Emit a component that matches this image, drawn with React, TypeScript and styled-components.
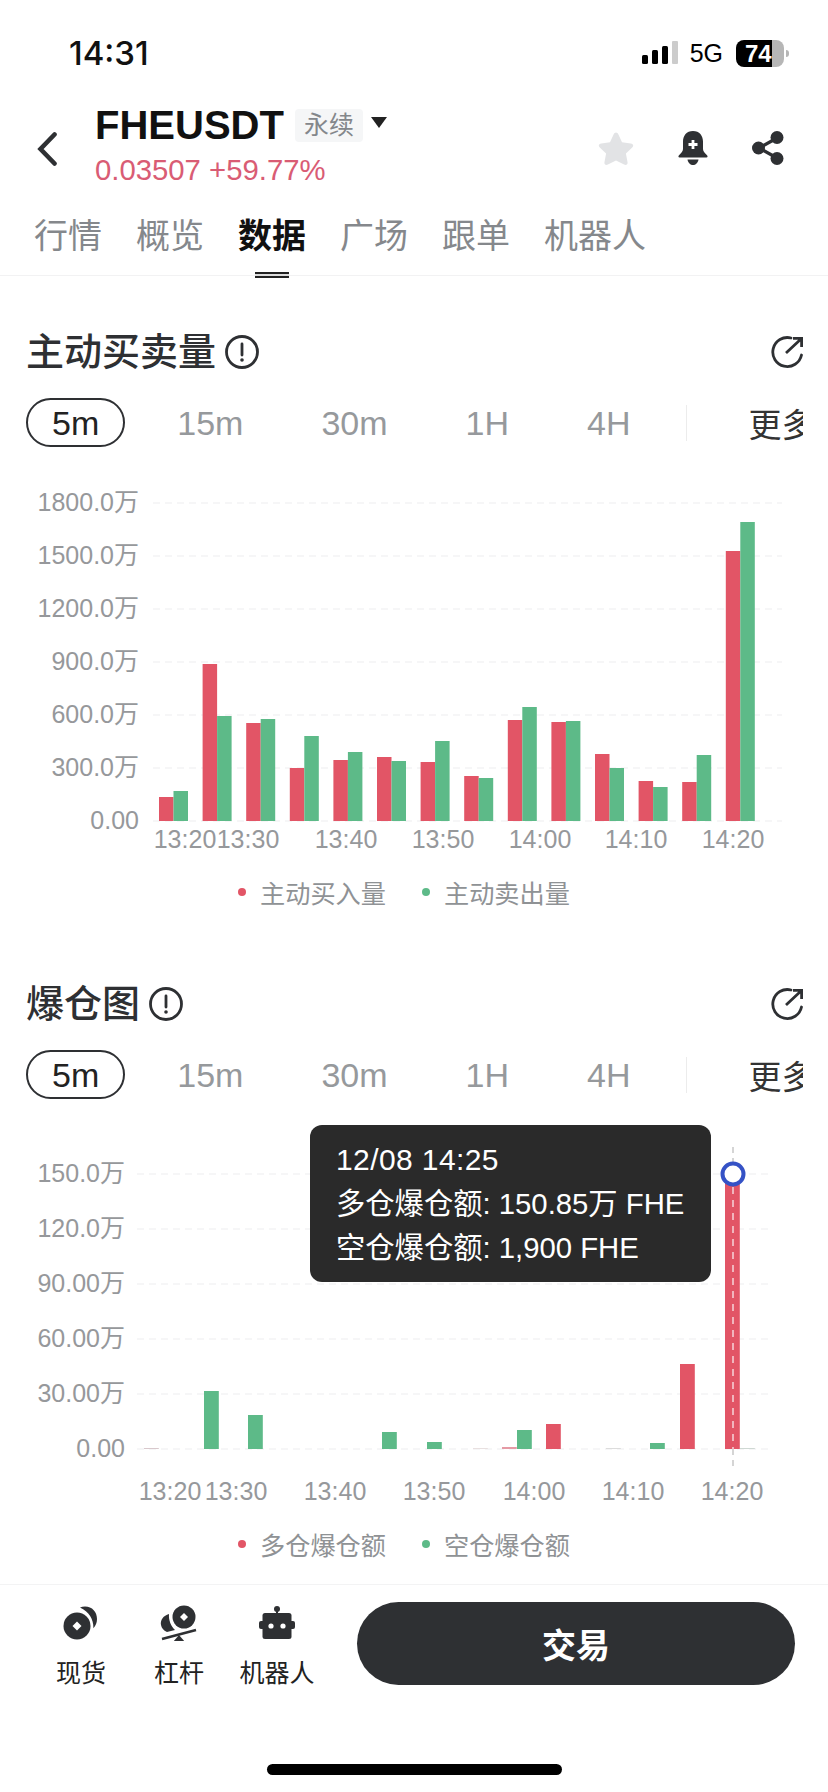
import styled, { createGlobalStyle } from 'styled-components';

const RED = '#E25566';
const GREEN = '#5DBA88';
const DARK = '#2E3033';

const GlobalStyle = createGlobalStyle`
  html, body {
    margin: 0;
    padding: 0;
    background: #fff;
  }
  * {
    box-sizing: border-box;
  }
  body {
    font-family: "Liberation Sans", "Noto Sans CJK SC", sans-serif;
  }
`;

type Bar = { x: number; h: number; color: string };

const buySellBars: Bar[] = [
  [24, 30],
  [157, 105],
  [98, 102],
  [53, 85],
  [61, 69],
  [64, 60],
  [59, 80],
  [45, 43],
  [101, 114],
  [99, 100],
  [67, 53],
  [40, 34],
  [39, 66],
  [270, 299],
].flatMap(([buy, sell], i) => [
  { x: 159 + i * 43.6, h: buy, color: RED },
  { x: 173.5 + i * 43.6, h: sell, color: GREEN },
]);

const liquidationBars: Bar[] = [
  { x: 144, h: 1, color: '#d8c8cc' },
  { x: 204, h: 58, color: GREEN },
  { x: 248, h: 34, color: GREEN },
  { x: 382, h: 17, color: GREEN },
  { x: 427, h: 7, color: GREEN },
  { x: 473, h: 1, color: '#e8e0e0' },
  { x: 502, h: 2, color: '#e59aa5' },
  { x: 517, h: 19, color: GREEN },
  { x: 546, h: 25, color: RED },
  { x: 606, h: 1, color: '#dcdcdc' },
  { x: 650, h: 6, color: GREEN },
  { x: 680, h: 85, color: RED },
  { x: 725, h: 275, color: RED },
  { x: 740, h: 1, color: '#cfd8d3' },
];

const buySellChart = {
  labels: ['0.00', '300.0万', '600.0万', '900.0万', '1200.0万', '1500.0万', '1800.0万'],
  baseline: 374,
  step: 53,
  gridFrom: 153,
  gridTo: 782,
  labelRight: 139,
  barWidth: 14.5,
  ticks: [
    ['13:20', 185],
    ['13:30', 248],
    ['13:40', 346],
    ['13:50', 443],
    ['14:00', 540],
    ['14:10', 636],
    ['14:20', 733],
  ] as [string, number][],
  tickY: 393,
  bars: buySellBars,
};

const liquidationChart = {
  labels: ['0.00', '30.00万', '60.00万', '90.00万', '120.0万', '150.0万'],
  baseline: 350,
  step: 55,
  gridFrom: 137,
  gridTo: 771,
  labelRight: 125,
  barWidth: 14.8,
  ticks: [
    ['13:20', 170],
    ['13:30', 236],
    ['13:40', 335],
    ['13:50', 434],
    ['14:00', 534],
    ['14:10', 633],
    ['14:20', 732],
  ] as [string, number][],
  tickY: 393,
  bars: liquidationBars,
};

const BarChart = ({ chart, cursorX }: { chart: typeof buySellChart; cursorX?: number }) => (
  <ChartSvg viewBox="0 0 828 426">
    {chart.labels.map((label, i) => {
      const y = chart.baseline - i * chart.step;
      return (
        <g key={label}>
          <line x1={chart.gridFrom} x2={chart.gridTo} y1={y} y2={y} stroke="#f4f4f5" strokeWidth="1.5" strokeDasharray="7 5" />
          <AxisLabel x={chart.labelRight} y={y + 8} textAnchor="end">
            {label}
          </AxisLabel>
        </g>
      );
    })}
    {chart.bars.map((bar) => (
      <rect key={bar.x} x={bar.x} y={chart.baseline - bar.h} width={chart.barWidth} height={bar.h} fill={bar.color} />
    ))}
    {chart.ticks.map(([label, x]) => (
      <AxisLabel key={label} x={x} y={chart.tickY + 8} textAnchor="middle">
        {label}
      </AxisLabel>
    ))}
    {cursorX !== undefined && (
      <g>
        <line x1={cursorX} x2={cursorX} y1={48} y2={75} stroke="#c8c8c8" strokeWidth="1.5" strokeDasharray="6 5" />
        <line x1={cursorX} x2={cursorX} y1={75} y2={350} stroke="#f6d5da" strokeWidth="1.5" strokeDasharray="7 6" />
        <line x1={cursorX} x2={cursorX} y1={350} y2={372} stroke="#c8c8c8" strokeWidth="1.5" strokeDasharray="6 5" />
        <circle cx={cursorX} cy={75} r={10.5} fill="#fff" stroke="#3552C6" strokeWidth="4" />
      </g>
    )}
  </ChartSvg>
);

const InfoIcon = () => (
  <svg width="34" height="34" viewBox="0 0 34 34" fill="none">
    <circle cx="17" cy="17" r="15.5" stroke={DARK} strokeWidth="2.8" />
    <path d="M17 9v11" stroke={DARK} strokeWidth="2.8" strokeLinecap="round" />
    <circle cx="17" cy="25" r="1.8" fill={DARK} />
  </svg>
);

const ExpandIcon = () => (
  <svg width="32" height="32" viewBox="0 0 32 32" fill="none">
    <path d="M20 2A14.500 14.500 0 1 0 30.500 19" stroke={DARK} strokeWidth="2.800" strokeLinecap="round" />
    <path d="M15 17 30 3M22 2.400h8.600V11" stroke={DARK} strokeWidth="2.800" />
  </svg>
);

const TIMES = ['5m', '15m', '30m', '1H', '4H'];

const Section = ({ title, children }: { title: string; children: React.ReactNode }) => (
  <SectionBlock>
    <SectionHead>
      <SectionTitle>
        {title}
        <InfoIcon />
      </SectionTitle>
      <ExpandIcon />
    </SectionHead>
    <TimeRow>
      {TIMES.map((t, i) => (
        <TimeItem key={t} $active={i === 0}>
          {t}
        </TimeItem>
      ))}
      <TimeDivider />
      <MoreItem>更多</MoreItem>
    </TimeRow>
    {children}
  </SectionBlock>
);

const Legend = ({ items }: { items: [string, string][] }) => (
  <LegendRow>
    {items.map(([label, color]) => (
      <LegendItem key={label}>
        <LegendDot $color={color} />
        {label}
      </LegendItem>
    ))}
  </LegendRow>
);

const CoinIcon = () => (
  <svg width="36" height="36" viewBox="0 0 36 36">
    <path d="M17 2.500c1.600-.7 3.300-1 5-1 7.300 0 12 5.500 12 12.500 0 3.700-1.300 6.800-3.600 9.200C30.600 14 26 6.500 17 2.500z" fill={DARK} />
    <circle cx="14" cy="21" r="13.500" fill={DARK} />
    <path d="M14 16.500 18.500 21 14 25.500 9.500 21z" fill="#fff" />
  </svg>
);

const LeverageIcon = () => (
  <svg width="38" height="36" viewBox="0 0 38 36">
    <circle cx="24" cy="12" r="11.500" fill={DARK} />
    <path d="M24 8l4 4-4 4-4-4z" fill="#fff" />
    <path d="M9 9C3.500 10.500 0 15 1 20c.6 3 2.500 5.500 6 7l8-2c-4-4-6.500-9.500-6-16z" fill={DARK} />
    <path d="M2 34 36 25" stroke={DARK} strokeWidth="2.600" />
    <path d="M19 30l6 7H13z" fill={DARK} />
  </svg>
);

const RobotIcon = () => (
  <svg width="36" height="36" viewBox="0 0 36 36">
    <circle cx="18" cy="4" r="3" fill={DARK} />
    <path d="M17 5h2v6h-2z" fill={DARK} />
    <rect x="3.500" y="8" width="29" height="26" rx="2.500" fill={DARK} />
    <rect x="0" y="16" width="36" height="8" rx="2" fill={DARK} />
    <circle cx="12" cy="21" r="2.600" fill="#fff" />
    <circle cx="24" cy="21" r="2.600" fill="#fff" />
  </svg>
);

const BellIcon = () => (
  <svg width="30" height="34" viewBox="0 0 30 34">
    <path d="M15 0C8.500 0 5 4.800 5 10.500V18c0 2-1.500 4-4 6.200-.9.800-.8 2.300.6 2.300h26.800c1.400 0 1.500-1.500.6-2.300C26.500 22 25 20 25 18v-7.500C25 4.800 21.500 0 15 0z" fill={DARK} />
    <path d="M9.500 28.500h11C20 32 17.500 34 15 34s-5-2-5.500-5.500z" fill={DARK} />
    <path d="M15 9v9M10.500 13.500h9" stroke="#fff" strokeWidth="2.800" />
  </svg>
);

const ShareIcon = () => (
  <svg width="32" height="34" viewBox="0 0 32 34">
    <path d="M25 7 7 17l18 10" fill="none" stroke={DARK} strokeWidth="3.400" />
    <circle cx="25" cy="6.500" r="6.500" fill={DARK} />
    <circle cx="6.500" cy="17" r="6.500" fill={DARK} />
    <circle cx="25" cy="27.500" r="6.500" fill={DARK} />
  </svg>
);

const NAV_TABS = ['行情', '概览', '数据', '广场', '跟单', '机器人'];

const App = () => {
  return (
    <Page>
      <GlobalStyle />
      <StatusBar>
        <Clock>14:31</Clock>
        <StatusRight>
          <svg width="36" height="24" viewBox="0 0 36 24">
            <rect x="0" y="14" width="6" height="9" rx="1.500" fill="#000" />
            <rect x="10" y="9" width="6" height="14" rx="1.500" fill="#000" />
            <rect x="20" y="5" width="6" height="18" rx="1.500" fill="#000" />
            <rect x="30" y="0" width="6" height="23" rx="1" fill="#ccc" />
          </svg>
          <Network>5G</Network>
          <Battery>
            <BatteryLevel>74</BatteryLevel>
          </Battery>
        </StatusRight>
      </StatusBar>

      <NavBar>
        <BackIcon width="20" height="34" viewBox="0 0 20 34" fill="none">
          <path d="M17.500 2.500 3.500 17l14 14.500" stroke={DARK} strokeWidth="4.600" strokeLinecap="round" />
        </BackIcon>
        <Symbol>
          <SymbolRow>
            <SymbolName>FHEUSDT</SymbolName>
            <SymbolTag>永续</SymbolTag>
            <Caret />
          </SymbolRow>
          <PriceLine>0.03507 +59.77%</PriceLine>
        </Symbol>
        <NavActions>
          <svg width="36" height="34" viewBox="0 0 36 34">
            <path d="M18 1.500c1 0 1.800.7 2.300 1.800l3.700 8 8.700 1.100c2.600.3 3.300 2.400 1.500 4.200l-6.300 6 1.600 8.300c.5 2.500-1.200 3.800-3.400 2.600L18 29.500l-8.100 4c-2.200 1.200-3.900-.1-3.400-2.600l1.600-8.300-6.300-6c-1.800-1.800-1.100-3.900 1.500-4.200l8.700-1.100 3.700-8C16.200 2.200 17 1.500 18 1.500z" fill="#E2E3E5" />
          </svg>
          <BellIcon />
          <ShareIcon />
        </NavActions>
      </NavBar>

      <TabBar>
        {NAV_TABS.map((tab) => (
          <TabItem key={tab} $active={tab === '数据'}>
            {tab}
          </TabItem>
        ))}
      </TabBar>

      <Section title="主动买卖量">
        <BarChart chart={buySellChart} />
        <Legend items={[['主动买入量', RED], ['主动卖出量', GREEN]]} />
      </Section>

      <Section title="爆仓图">
        <ChartArea>
          <BarChart chart={liquidationChart} cursorX={733} />
          <Tooltip>
            <TooltipTime>12/08 14:25</TooltipTime>
            <span>多仓爆仓额: 150.85万 FHE</span>
            <span>空仓爆仓额: 1,900 FHE</span>
          </Tooltip>
        </ChartArea>
        <Legend items={[['多仓爆仓额', RED], ['空仓爆仓额', GREEN]]} />
      </Section>

      <BottomBar>
        <ToolItem>
          <ToolIcon>
            <CoinIcon />
          </ToolIcon>
          现货
        </ToolItem>
        <ToolItem>
          <ToolIcon>
            <LeverageIcon />
          </ToolIcon>
          杠杆
        </ToolItem>
        <ToolItem>
          <ToolIcon>
            <RobotIcon />
          </ToolIcon>
          机器人
        </ToolItem>
        <TradeButton>交易</TradeButton>
      </BottomBar>
      <HomeIndicator />
    </Page>
  );
};

export default App;

const Page = styled.div`
  width: 828px;
  height: 1792px;
  overflow: hidden;
  background: #fff;
`;

const StatusBar = styled.div`
  height: 106px;
  padding: 0 44px 0 69px;

  display: flex;
  align-items: center;
  justify-content: space-between;
`;

const Clock = styled.span`
  font-family: Inter, sans-serif;
  font-size: 33px;
  font-weight: 500;
  color: #111;
`;

const StatusRight = styled.div`
  display: flex;
  align-items: center;
`;

const Network = styled.span`
  margin: 0 13px 0 12px;

  font-size: 25px;
  color: #000;
`;

const Battery = styled.div`
  position: relative;
  width: 48px;
  height: 27px;
  border-radius: 8px;
  background: linear-gradient(90deg, #000 0 36px, #b6b6b6 36px);

  &::after {
    content: '';
    position: absolute;
    top: 10px;
    right: -5px;
    width: 3px;
    height: 7px;
    border-radius: 0 3px 3px 0;
    background: #b6b6b6;
  }
`;

const BatteryLevel = styled.span`
  display: block;
  padding-left: 9px;

  font-size: 24px;
  font-weight: 700;
  line-height: 27px;
  color: #fff;
`;

const NavBar = styled.div`
  height: 112px;
  padding: 3px 44px 0 37px;

  display: flex;
`;

const BackIcon = styled.svg`
  margin: 23px 38px 0 0;
  flex-shrink: 0;
`;

const Symbol = styled.div`
  display: flex;
  flex-direction: column;
`;

const SymbolRow = styled.div`
  height: 33px;

  display: flex;
  align-items: center;
`;

const SymbolName = styled.span`
  font-size: 40px;
  font-weight: 700;
  color: #111;
`;

const SymbolTag = styled.span`
  width: 68px;
  height: 33px;
  margin-left: 11px;
  border-radius: 4px;
  background: #f5f6f7;

  font-size: 25px;
  line-height: 33px;
  text-align: center;
  color: #84878b;
`;

const Caret = styled.span`
  width: 0;
  height: 0;
  margin: -6px 0 0 8px;
  border-left: 8.5px solid transparent;
  border-right: 8.5px solid transparent;
  border-top: 11px solid #222;
`;

const PriceLine = styled.span`
  margin-top: 13px;

  font-size: 29.3px;
  line-height: 30px;
  color: #d95c74;
`;

const NavActions = styled.div`
  margin: 21px 0 0 auto;
  height: 36px;

  display: flex;
  align-items: center;
  gap: 44px;
`;

const TabBar = styled.div`
  height: 58px;
  padding: 2px 0 0 34px;
  border-bottom: 1px solid #f2f2f3;

  display: flex;
  gap: 34px;
`;

const TabItem = styled.span<{ $active?: boolean }>`
  position: relative;
  height: 33px;

  font-size: 34px;
  line-height: 33px;
  font-weight: ${({ $active }) => ($active ? 700 : 400)};
  color: ${({ $active }) => ($active ? '#111' : '#85888c')};

  &::after {
    content: '';
    display: ${({ $active }) => ($active ? 'block' : 'none')};
    position: absolute;
    left: 17px;
    top: 52px;
    width: 34px;
    height: 6px;
    background: linear-gradient(#222 0 2px, #ddd 2px 4px, #222 4px);
  }
`;

const SectionBlock = styled.section`
  padding: 59px 0 13px;
`;

const SectionHead = styled.div`
  height: 34px;
  margin: 0 25px 0 26px;

  display: flex;
  align-items: center;
  justify-content: space-between;
`;

const SectionTitle = styled.h2`
  margin: 0;

  display: flex;
  align-items: center;
  gap: 9px;

  font-size: 38px;
  font-weight: 500;
  line-height: 34px;
  color: ${DARK};
`;

const TimeRow = styled.div`
  height: 49px;
  margin: 29px 25px 0 26px;
  overflow: hidden;

  display: flex;
  align-items: center;
  gap: 26px;
`;

const TimeItem = styled.span<{ $active?: boolean }>`
  height: 49px;
  padding: 0 24px;
  flex-shrink: 0;
  border: 2px solid ${({ $active }) => ($active ? DARK : 'transparent')};
  border-radius: 25px;

  font-size: 34px;
  line-height: 46px;
  color: ${({ $active }) => ($active ? '#222' : '#96999c')};
`;

const TimeDivider = styled.span`
  width: 1px;
  height: 36px;
  margin-left: 4px;
  flex-shrink: 0;
  background: #ececec;
`;

const MoreItem = styled.span`
  margin-left: 35px;
  flex-shrink: 0;

  font-size: 33px;
  color: #333;
`;

const ChartSvg = styled.svg`
  display: block;
  width: 828px;
  height: 426px;
`;

const AxisLabel = styled.text`
  font-size: 25px;
  fill: #96989b;
`;

const ChartArea = styled.div`
  position: relative;
`;

const Tooltip = styled.div`
  position: absolute;
  left: 310px;
  top: 26px;
  width: 401px;
  height: 157px;
  padding-left: 26px;
  border-radius: 12px;
  background: #2a2a2a;

  display: flex;
  flex-direction: column;
  justify-content: center;

  font-size: 29.3px;
  line-height: 44px;
  color: #fff;
`;

const TooltipTime = styled.span`
  font-size: 30px;
  letter-spacing: 0.4px;
`;

const LegendRow = styled.div`
  height: 42px;
  margin-top: -2px;
  margin-bottom: 2px;
  padding-left: 238px;

  display: flex;
  align-items: center;
  gap: 36px;
`;

const LegendItem = styled.span`
  display: flex;
  align-items: center;
  gap: 14px;

  font-size: 25.2px;
  color: #8f9295;
`;

const LegendDot = styled.span<{ $color: string }>`
  width: 8px;
  height: 8px;
  border-radius: 50%;
  background: ${({ $color }) => $color};
`;

const BottomBar = styled.div`
  height: 101px;
  margin-top: 4px;
  padding: 17px 0 0 44px;
  border-top: 1px solid #f3f3f4;

  display: flex;
  gap: 24px;
`;

const ToolItem = styled.div`
  width: 74px;
  padding-top: 3px;

  display: flex;
  flex-direction: column;
  align-items: center;

  font-size: 25px;
  line-height: 32px;
  white-space: nowrap;
  color: #222;
`;

const ToolIcon = styled.span`
  height: 36px;
  margin-bottom: 16px;

  display: flex;
`;

const TradeButton = styled.button`
  width: 438px;
  height: 83px;
  margin-left: 19px;
  border: none;
  border-radius: 42px;
  background: ${DARK};

  font-family: inherit;
  font-size: 34px;
  font-weight: 700;
  color: #fff;
`;

const HomeIndicator = styled.div`
  width: 295px;
  height: 11px;
  margin: 79px 0 0 267px;
  border-radius: 6px;
  background: #000;
`;
